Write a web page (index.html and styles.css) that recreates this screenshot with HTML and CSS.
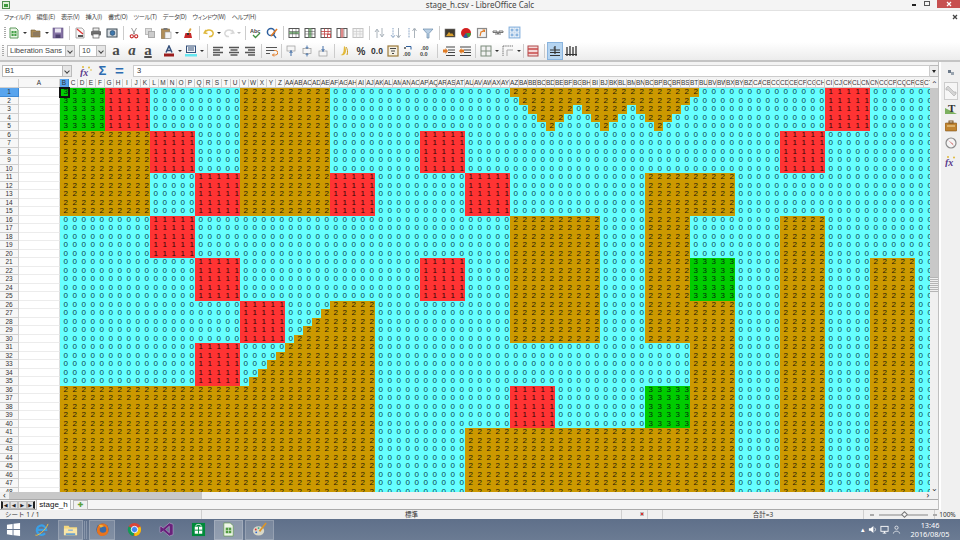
FILE: index.html
```html
<!DOCTYPE html>
<html lang="ja">
<head>
<meta charset="UTF-8">
<title>stage_h.csv - LibreOffice Calc</title>
<link rel="stylesheet" href="styles.css">
</head>
<body>
<div class="window">

  <div class="titlebar">
    <svg class="app-icon" viewBox="0 0 8 8"><rect x="0.5" y="0.5" width="7" height="7" fill="#dff0d8" stroke="#4f8f4f"/><rect x="2" y="3" width="4" height="3" fill="#3d9a3d"/></svg>
    <span class="title">stage_h.csv - LibreOffice Calc</span>
    <div class="win-buttons">
      <span class="win-min"></span>
      <span class="win-max"></span>
      <span class="win-close"><svg viewBox="0 0 6 6"><path d="M1 1l4 4M5 1L1 5" stroke="#fff" stroke-width="1.2"/></svg></span>
    </div>
  </div>

  <div class="menubar">
    <span>ファイル(F)</span><span>編集(E)</span><span>表示(V)</span><span>挿入(I)</span><span>書式(O)</span><span>ツール(T)</span><span>データ(D)</span><span>ウィンドウ(W)</span><span>ヘルプ(H)</span>
    <svg class="menu-close" viewBox="0 0 6 6"><path d="M1 1l4 4M5 1L1 5" stroke="#444" stroke-width="1.3"/></svg>
  </div>

  <div class="toolbar">
    <i class="grip"></i>
    <b class="btn"><svg viewBox="0 0 12 12"><path d="M2 1h6l2 2v8H2z" fill="#eaf5e6" stroke="#5f9a5f"/><rect x="3.5" y="4" width="5" height="5" fill="#43a047"/><path d="M3.5 6.5h5M6 4v5" stroke="#dff0d8" stroke-width=".7"/></svg></b><b class="dd"></b>
    <b class="btn"><svg viewBox="0 0 12 12"><path d="M1 3h4l1 1h4v6H1z" fill="#a98a56" stroke="#6f5a38" stroke-width=".6"/><rect x="3" y="5" width="7" height="4" fill="#8c7a60"/></svg></b><b class="dd"></b>
    <b class="btn"><svg viewBox="0 0 12 12"><rect x="1" y="1" width="10" height="10" fill="#8674a6" stroke="#5f5080" stroke-width=".6"/><rect x="3" y="1.5" width="6" height="4" fill="#e8e4f0"/><rect x="3.5" y="7.5" width="5" height="3.5" fill="#4e4270"/></svg></b>
    <i class="sep"></i>
    <b class="btn"><svg viewBox="0 0 12 12"><path d="M2 1h6l2 2v8H2z" fill="#f6f6f6" stroke="#888" stroke-width=".7"/><path d="M3 2l6 5" stroke="#d33" stroke-width="1.2"/><rect x="4" y="8" width="5" height="2" fill="#555"/></svg></b>
    <b class="btn"><svg viewBox="0 0 12 12"><rect x="3" y="1" width="6" height="3" fill="#eee" stroke="#555" stroke-width=".7"/><rect x="1" y="4" width="10" height="4.5" rx="1" fill="#6f6f6f"/><rect x="3" y="7" width="6" height="4" fill="#fafafa" stroke="#555" stroke-width=".7"/></svg></b>
    <b class="btn"><svg viewBox="0 0 12 12"><rect x="1" y="2" width="10" height="8" fill="#d5dbe0" stroke="#3c4a55"/><circle cx="6.5" cy="6" r="2.4" fill="#3f78ad" stroke="#1f3f60" stroke-width=".6"/></svg></b>
    <i class="sep"></i>
    <b class="btn"><svg viewBox="0 0 12 12"><path d="M3.5 1L7 7.5M8.5 1L5 7.5" stroke="#9a9a9a" stroke-width="1"/><circle cx="3.8" cy="9.3" r="1.6" fill="none" stroke="#c62828" stroke-width="1.1"/><circle cx="8.2" cy="9.3" r="1.6" fill="none" stroke="#c62828" stroke-width="1.1"/></svg></b>
    <b class="btn"><svg viewBox="0 0 12 12"><rect x="1.5" y="1.5" width="6" height="6" fill="#ddd" stroke="#bbb"/><rect x="4.5" y="4.5" width="6" height="6" fill="#ccc" stroke="#aaa"/></svg></b>
    <b class="btn"><svg viewBox="0 0 12 12"><rect x="1.5" y="2" width="8" height="9.5" fill="#b08d57" stroke="#7e6238" stroke-width=".6"/><rect x="3.5" y="1" width="4" height="2" fill="#777"/><rect x="5" y="5" width="6" height="6.5" fill="#f3f3f3" stroke="#999" stroke-width=".6"/></svg></b><b class="dd"></b>
    <b class="btn"><svg viewBox="0 0 12 12"><path d="M8 1l1.5 1L7.5 6 6 5z" fill="#d9a441"/><path d="M3.5 6h5.5l1 5H2z" fill="#c62828"/><path d="M5 6h2v2H5z" fill="#333"/></svg></b>
    <i class="sep"></i>
    <b class="btn btn-s"><svg viewBox="0 0 12 12"><path d="M3 3L1.2 6 4.5 6.5M1.5 5.8C3 2.5 8.5 2 10 5.5 10.8 8 8.5 10 6 9.5" fill="none" stroke="#dfb93f" stroke-width="1.5"/></svg></b><b class="dd"></b>
    <b class="btn btn-s"><svg viewBox="0 0 12 12"><path d="M9 3l1.8 3-3.3.5M10.5 5.8C9 2.5 3.5 2 2 5.5 1.2 8 3.5 10 6 9.5" fill="none" stroke="#d8d8d8" stroke-width="1.5"/></svg></b><b class="dd dd-off"></b>
    <i class="sep"></i>
    <b class="btn"><svg viewBox="0 0 12 12"><text x="0" y="5.5" class="ic-text">Abc</text><path d="M3 8l2.5 2.5L10 6" fill="none" stroke="#3f8f3f" stroke-width="1.3"/></svg></b>
    <b class="btn"><svg viewBox="0 0 12 12"><circle cx="5" cy="5" r="3.6" fill="none" stroke="#2d5f9e" stroke-width="1.5"/><path d="M7 7l3 4" stroke="#2d5f9e" stroke-width="1.3"/><path d="M11 2L5 9" stroke="#e07b24" stroke-width="1.6"/></svg></b>
    <i class="sep"></i>
    <b class="btn"><svg viewBox="0 0 12 12"><rect x="1" y="1.5" width="10" height="9" fill="#fff" stroke="#555"/><rect x="1" y="4.5" width="10" height="2.5" fill="#7fb27f"/><path d="M1 4.5h10M1 7h10M4.5 1.5v9M8 1.5v9" stroke="#555" stroke-width=".5"/></svg></b>
    <b class="btn"><svg viewBox="0 0 12 12"><rect x="1" y="1.5" width="10" height="9" fill="#fff" stroke="#555"/><rect x="4.5" y="1.5" width="3" height="9" fill="#7fb27f"/><path d="M1 4.5h10M1 7h10M4.5 1.5v9M8 1.5v9" stroke="#555" stroke-width=".5"/></svg></b>
    <b class="btn"><svg viewBox="0 0 12 12"><rect x="1" y="1.5" width="10" height="9" fill="#fff" stroke="#555"/><path d="M1 4.5h10M1 7h10M4.5 1.5v9M8 1.5v9" stroke="#c04040" stroke-width=".8"/><rect x="7.5" y="7.5" width="3" height="3" fill="#fff" stroke="#c04040" stroke-width=".8"/></svg></b>
    <b class="btn"><svg viewBox="0 0 12 12"><rect x="1" y="1.5" width="10" height="9" fill="#fff" stroke="#555"/><rect x="4.5" y="1.5" width="3" height="9" fill="#e08a8a"/><path d="M4.5 1.5v9M8 1.5v9" stroke="#555" stroke-width=".5"/></svg></b>
    <b class="btn"><svg viewBox="0 0 12 12"><rect x="1" y="1.5" width="10" height="9" fill="#f4f4f4" stroke="#c4c4c4"/><path d="M1 4.5h10M1 7h10M4.5 1.5v9M8 1.5v9" stroke="#cfcfcf" stroke-width=".7"/></svg></b>
    <i class="sep"></i>
    <b class="btn"><svg viewBox="0 0 12 12"><path d="M3 11V3M1 5l2-3 2 3M8 1v8M6 7l2 3 2-3" fill="none" stroke="#aab3bb" stroke-width="1"/></svg></b>
    <b class="btn"><svg viewBox="0 0 12 12"><path d="M3 1v9M1 8l2 3 2-3" fill="none" stroke="#7e9cc0" stroke-width="1" stroke-dasharray="1 .6"/><path d="M8.5 1v9M6.5 8l2 3 2-3" fill="none" stroke="#aab3bb" stroke-width="1"/></svg></b>
    <b class="btn"><svg viewBox="0 0 12 12"><path d="M3 1v10" stroke="#7e9cc0" stroke-width="1" stroke-dasharray="1 .6"/><path d="M8.5 11V2M6.5 4l2-3 2 3" fill="none" stroke="#aab3bb" stroke-width="1"/></svg></b>
    <b class="btn"><svg viewBox="0 0 12 12"><path d="M1 2h10L7 6.5V11H5V6.5z" fill="#b9cfe4" stroke="#6a8bab" stroke-width=".7"/></svg></b>
    <i class="sep"></i>
    <b class="btn"><svg viewBox="0 0 12 12"><rect x="1" y="2" width="10" height="8" fill="#3f3a30" stroke="#777" stroke-width=".6"/><path d="M2 9l3-4 2 2 1-1 2 3z" fill="#d9a02f"/></svg></b>
    <b class="btn"><svg viewBox="0 0 12 12"><circle cx="6" cy="6" r="5" fill="#d32020"/><path d="M6 6h5a5 5 0 0 1-3 4.6z" fill="#3d9a3d"/><path d="M6 6l2 4.6A5 5 0 0 1 3 10z" fill="#2d5f9e"/></svg></b>
    <b class="btn"><svg viewBox="0 0 12 12"><rect x="1.5" y="1.5" width="9" height="9" fill="#f2f2f2" stroke="#8a8a8a" stroke-width="1.2"/><path d="M4 9l1-4 3-1M6.5 3H8.5V5" fill="none" stroke="#e07b24" stroke-width="1.1"/></svg></b>
    <b class="btn"><svg viewBox="0 0 12 12"><path d="M1 4h4v1.5H1zM7 4h4v1.5H7zM3 7h6" fill="none" stroke="#666" stroke-width=".9"/><path d="M5 5l2 2M7 5L5 7" stroke="#666" stroke-width=".8"/></svg></b>
    <b class="btn btn-on"><svg viewBox="0 0 12 12"><rect x=".5" y=".5" width="11" height="11" fill="#8ab4de"/><rect x="2" y="2" width="3.5" height="3.5" fill="none" stroke="#fff" stroke-width=".8"/><rect x="6.5" y="2" width="3.5" height="3.5" fill="none" stroke="#fff" stroke-width=".8"/><rect x="2" y="6.5" width="3.5" height="3.5" fill="none" stroke="#fff" stroke-width=".8"/><rect x="6.5" y="6.5" width="3.5" height="3.5" fill="none" stroke="#fff" stroke-width=".8"/></svg></b>
  </div>

  <div class="toolbar toolbar-format">
    <i class="grip"></i>
    <div class="combo combo-font"><span>Liberation Sans</span><u></u></div>
    <div class="combo combo-size"><span>10</span><u></u></div>
    <b class="btn letter">a</b>
    <b class="btn letter letter-i">a</b>
    <b class="btn letter letter-u">a</b>
    <b class="gap"></b>
    <b class="btn"><svg viewBox="0 0 12 12"><path d="M3 7.5L6 1l3 6.5M4 5.5h4" fill="none" stroke="#35507a" stroke-width="1.5"/><rect x="1" y="8.5" width="10" height="3" fill="#9a1c1c"/></svg></b><b class="dd"></b>
    <b class="btn"><svg viewBox="0 0 12 12"><rect x="1.5" y="1" width="9" height="6.5" fill="#f2f4f6" stroke="#35507a"/><path d="M3 3h6M3 5h6" stroke="#35507a"/><rect x="0" y="9" width="12" height="2.5" fill="#66e6f0"/></svg></b><b class="dd"></b>
    <i class="sep sep-5"></i>
    <b class="btn"><svg viewBox="0 0 12 12"><path d="M1 2.5h10M1 5h7M1 7.5h10M1 10h7" stroke="#555" stroke-width="1.3"/></svg></b>
    <b class="btn"><svg viewBox="0 0 12 12"><path d="M1 2.5h10M2.5 5h7M1 7.5h10M2.5 10h7" stroke="#555" stroke-width="1.3"/></svg></b>
    <b class="btn"><svg viewBox="0 0 12 12"><path d="M1 2.5h10M4 5h7M1 7.5h10M4 10h7" stroke="#555" stroke-width="1.3"/></svg></b>
    <i class="sep"></i>
    <b class="btn"><svg viewBox="0 0 12 12"><path d="M0 2.5h11M0 5.5h8.5M0 8.5h4" stroke="#555" stroke-width="1.2"/><path d="M8 5.5h1.5a2 2 0 0 1 0 4.5H6.5M8 8.5l-1.5 1.5 1.500 1.5" fill="none" stroke="#e07b24" stroke-width="1"/></svg></b>
    <i class="sep sep-3"></i>
    <b class="btn"><svg viewBox="0 0 12 12"><rect x="2" y="1" width="8" height="5" fill="#f5f5f5" stroke="#999" stroke-width=".7"/><path d="M6 5v6M4.5 8L6 6.5 7.5 8" fill="none" stroke="#2d5f9e" stroke-width=".9"/></svg></b>
    <b class="btn"><svg viewBox="0 0 12 12"><rect x="2" y="3.5" width="8" height="5" fill="#f5f5f5" stroke="#999" stroke-width=".7"/><path d="M6 .5v3M4.7 2L6 3.5 7.3 2M6 11.5v-3M4.7 10L6 8.5 7.3 10" fill="none" stroke="#2d5f9e" stroke-width=".8"/></svg></b>
    <b class="btn"><svg viewBox="0 0 12 12"><rect x="2" y="6" width="8" height="5" fill="#f5f5f5" stroke="#999" stroke-width=".7"/><path d="M6 1v6M4.5 4L6 5.5 7.5 4" fill="none" stroke="#2d5f9e" stroke-width=".9"/></svg></b>
    <i class="sep"></i>
    <b class="btn"><svg viewBox="0 0 12 12"><path d="M5 1c2 1 2.5 5 1.5 7C5.5 10.5 3 10.5 1.5 10 3.5 9.5 4 8 4.5 6.5z" fill="#e2b93a"/><path d="M7 2c1.5 2 2 5 1 8" fill="none" stroke="#c99a1f"/></svg></b>
    <b class="btn num">%</b>
    <b class="btn num num-s">0.0</b>
    <b class="btn"><svg viewBox="0 0 12 12"><rect x="1" y="1" width="10" height="10" fill="#f4efe2" stroke="#9c7a3a" stroke-width="1.2"/><path d="M3 3.5h6M4 6h4M5 8.5h2" stroke="#444"/></svg></b>
    <b class="btn"><svg viewBox="0 0 12 12"><path d="M3 1.5h5v3" fill="none" stroke="#2d5f9e"/><text x="0" y="11" class="ic-text">.00</text><rect x="1" y="2" width="2" height="2" fill="#777"/></svg></b>
    <b class="btn"><svg viewBox="0 0 12 12"><text x="2" y="5" class="ic-text">.00</text><text x="1" y="11" class="ic-text">0.0</text></svg></b>
    <i class="sep sep-8"></i>
    <b class="btn"><svg viewBox="0 0 12 12"><path d="M3 2h9M5 5h7M5 7.5h7M3 10.5h9" stroke="#444" stroke-width="1.1"/><path d="M0 4.5h2.5V3L5 6 2.5 9V7.5H0z" fill="#e07b24"/></svg></b>
    <b class="btn"><svg viewBox="0 0 12 12"><path d="M1 2h11M5 5h7M5 7.5h7M1 10.5h11" stroke="#444" stroke-width="1.1"/><path d="M5 4.5H2.5V3L0 6l2.5 3V7.5H5z" fill="#e07b24"/></svg></b>
    <i class="sep sep-5"></i>
    <b class="btn"><svg viewBox="0 0 12 12"><rect x="1" y="1" width="10" height="10" fill="#f2f2f2" stroke="#7d8c7d"/><path d="M6 1v10M1 6h10" stroke="#7d8c7d"/></svg></b><b class="dd"></b>
    <b class="btn"><svg viewBox="0 0 12 12"><path d="M1 1h10M1 1v10" stroke="#777" stroke-width="1" stroke-dasharray="1.5 .7"/><path d="M5 5h6M5 5v6" stroke="#aaa" stroke-width="1"/></svg></b><b class="dd"></b>
    <i class="sep sep-3"></i>
    <b class="btn"><svg viewBox="0 0 12 12"><rect x="1" y="1" width="10" height="10" fill="#f4d8d8" stroke="#b04848"/><path d="M1 4h10M1 8h10" stroke="#c84a4a" stroke-width="1.3"/></svg></b>
    <i class="sep"></i>
    <b class="btn btn-active"><svg viewBox="0 0 12 12"><path d="M6 1v8M4.5 3h1.5M1 5h10M1 7.5h10M1 10.5h10" stroke="#333" stroke-width="1.2"/></svg></b>
    <b class="btn"><svg viewBox="0 0 12 12"><path d="M2 2v9M5 1v10M8 2v9M11 1v10" stroke="#333" stroke-width="1.3"/><path d="M0 9.5h12" stroke="#333"/></svg></b>
  </div>

  <div class="workspace">
    <div class="sheet-pane">

      <div class="formula-bar">
        <div class="combo combo-name"><span>B1</span><u></u></div>
        <span class="fx-btn"><svg viewBox="0 0 12 12"><text x="0" y="10.5" class="fx-text">fx</text><circle cx="3" cy="2" r="1" fill="#e0b93a"/><circle cx="9" cy="2.5" r="1" fill="#e0b93a"/><circle cx="11" cy="5" r=".8" fill="#e0b93a"/></svg></span>
        <span class="fx-btn fx-sum">Σ</span>
        <span class="fx-btn fx-eq">=</span>
        <div class="formula-input">3</div>
        <u class="formula-drop"></u>
      </div>

      <div class="sheet-wrap">
        <div class="sheet" id="sheet"></div>
        <div class="vscroll">
          <span class="arrow">⌃</span>
          <div class="vthumb"><i></i></div>
          <div class="vtrack"></div>
          <span class="arrow">⌄</span>
        </div>
      </div>

      <div class="hscroll">
        <span class="arrow arrow-left">‹</span>
        <div class="hthumb"></div>
        <div class="htrack"></div>
        <span class="arrow arrow-right">›</span>
      </div>

      <div class="tabs">
        <span class="tab-nav tab-first">◀</span><span class="tab-nav">◀</span><span class="tab-nav">▶</span><span class="tab-nav tab-last">▶</span>
        <span class="tab">stage_h</span>
        <span class="tab-add">✚</span>
      </div>
    </div>

    <div class="sidebar">
      <span class="side-top"><svg viewBox="0 0 8 8"><rect x="1" y="2" width="3" height="3" fill="#6d7a8a"/><rect x="4" y="4" width="3" height="3" fill="#9aa5b0"/></svg></span>
      <span class="side-item side-on"><svg viewBox="0 0 12 12"><path d="M1 3l2-2 2 2 4 4 2 0v2l-2 2-2-2-4-4-2 0z" fill="#d4d4d4" stroke="#aaa" stroke-width=".6"/></svg></span>
      <span class="side-item"><svg viewBox="0 0 12 12"><path d="M0 12V6l12 6z" fill="#7cb060"/><text x="3" y="9.5" class="side-t">T</text></svg></span>
      <span class="side-item"><svg viewBox="0 0 12 12"><rect x="0" y="3" width="12" height="8" rx="1" fill="#c08430" stroke="#7e5420" stroke-width=".6"/><rect x="4" y="1" width="4" height="2" fill="none" stroke="#7e5420"/><path d="M2 6h8" stroke="#f0d090" stroke-width="1.2"/></svg></span>
      <span class="side-item"><svg viewBox="0 0 12 12"><circle cx="6" cy="6" r="5" fill="#f4f4f4" stroke="#8b8b8b" stroke-width="1.2"/><path d="M3 3l4.5 3.5L9 9z" fill="#c64848"/></svg></span>
      <span class="side-item"><svg viewBox="0 0 12 12"><text x="0" y="10.5" class="fx-text">fx</text><circle cx="3" cy="2" r="1" fill="#e0b93a"/><circle cx="9" cy="2.5" r="1" fill="#e0b93a"/></svg></span>
    </div>
  </div>

  <div class="statusbar">
    <span class="st st-sheet">シート 1 / 1</span>
    <span class="st st-style">標準</span>
    <span class="st st-icon"><i></i></span>
    <span class="st st-blank"></span>
    <span class="st st-sum">合計=3</span>
    <span class="st st-zoom"><i class="minus"></i><i class="slider"><em></em></i><i class="plus"></i></span>
    <span class="st st-pct">100%</span>
  </div>

  <div class="taskbar">
    <span class="task task-start"><svg viewBox="0 0 16 16"><path d="M1 3l6-1v5.5H1zM8 1.8L15 1v6.5H8zM1 8.5h6V14l-6-1zM8 8.5h7V15l-7-1z" fill="#fff"/></svg></span>
    <span class="task task-ie"><svg viewBox="0 0 16 16"><path d="M3.5 8.5h9.5A5 5 0 1 0 11.8 12" fill="none" stroke="#3aa0e8" stroke-width="2.4"/><path d="M1.500 14c2 1.500 11-5 13.500-12" fill="none" stroke="#f0c040" stroke-width="1"/></svg></span>
    <span class="task task-open task-files"><svg viewBox="0 0 16 16"><path d="M1 4h5l1 1.5h8V14H1z" fill="#f4d77e"/><rect x="1" y="7" width="14" height="7" fill="#f9e6a8"/><rect x="5.5" y="8" width="5" height="1.5" fill="#8fb6d6"/><rect x="3" y="12" width="10" height="2" fill="#6aa0cc"/></svg></span>
    <i class="task-grip"></i>
    <span class="task task-open"><svg viewBox="0 0 16 16"><circle cx="8" cy="8" r="6.5" fill="#2d5a96"/><path d="M2 9c0-5 3-7.5 6-7.5 3 0 6 2 6.3 5.5C15 12 12 15 8 15c-3.5 0-6-3-6-6z" fill="#e8741e"/><circle cx="8.5" cy="8" r="3.5" fill="#3b6ba8"/><path d="M4 3c2-.5 5 .5 5.5 1.5L6 6z" fill="#f2b43a"/></svg></span>
    <span class="task"><svg viewBox="0 0 16 16"><circle cx="8" cy="8" r="7" fill="#db4437"/><path d="M8 8l6.2-3.2A7 7 0 0 1 8 15z" fill="#f4c20d"/><path d="M8 8l-1 7A7 7 0 0 1 1.8 4.5z" fill="#0f9d58"/><circle cx="8" cy="8" r="3.4" fill="#4285f4" stroke="#fff" stroke-width="1"/></svg></span>
    <span class="task"><svg viewBox="0 0 16 16"><path d="M11 1l4 1.5v11L11 15 4.5 9.5 2 11.5 1 11V5l1-.5L4.5 6.5zM11 4.5L7 8l4 3.5z" fill="#68217a" stroke="#d0c0e0" stroke-width=".5"/></svg></span>
    <span class="task"><svg viewBox="0 0 16 16"><rect x="1" y="1" width="14" height="14" fill="#008a3a"/><path d="M5 4.5C5 2 11 2 11 4.5" fill="none" stroke="#fff"/><rect x="4" y="5" width="8" height="7.5" fill="#fff"/><path d="M8 5v7.5M4 8.7h8" stroke="#008a3a"/></svg></span>
    <span class="task task-open task-calc"><svg viewBox="0 0 16 16"><path d="M3 1h7l3 3v11H3z" fill="#eef6e8" stroke="#6a9a5a" stroke-width=".8"/><rect x="5" y="6" width="6" height="6" fill="#4f9a3d"/><path d="M8 6v6M5 9h6" stroke="#eef6e8" stroke-width=".6"/></svg></span>
    <span class="task task-open task-paint"><svg viewBox="0 0 16 16"><ellipse cx="7" cy="9.5" rx="6" ry="5" fill="#d8d8c8"/><circle cx="4" cy="8" r="1" fill="#d33"/><circle cx="7" cy="6.5" r="1" fill="#3a8"/><circle cx="4.5" cy="11" r="1" fill="#36c"/><path d="M15 1L8 10" stroke="#d9942a" stroke-width="1.8"/></svg></span>
    <div class="tray">
      <span class="tray-up">▴</span>
      <svg class="tray-icon" viewBox="0 0 10 10"><path d="M1 3.5h2L6 1v8L3 6.5H1z" fill="#fff"/><path d="M7.5 3a3 3 0 0 1 0 4" fill="none" stroke="#fff" stroke-width=".8"/></svg>
      <svg class="tray-icon" viewBox="0 0 10 10"><rect x="1" y="1.5" width="8" height="5.5" fill="none" stroke="#fff"/><path d="M3 9h4M5 7v2" stroke="#fff"/></svg>
      <svg class="tray-icon" viewBox="0 0 10 10"><circle cx="5" cy="3" r="1.8" fill="none" stroke="#fff" stroke-width=".8"/><path d="M1.5 9.5C2 6 8 6 8.5 9.5" fill="none" stroke="#fff" stroke-width=".8"/></svg>
      <div class="clock"><span>13:46</span><span>2016/08/05</span></div>
    </div>
  </div>

</div>
<script src="script.js"></script>
</body>
</html>
```

FILE: styles.css
```css
* {
  box-sizing: border-box;
}

body {
  margin: 0;
  width: 960px;
  height: 540px;
  overflow: hidden;
  font-family: "Noto Sans", "Noto Sans CJK JP", sans-serif;
  color: #333;
  background: #f0f0f0;
}

.window {
  display: flex;
  flex-direction: column;
  height: 540px;
}

/* title + menu */
.titlebar {
  height: 11px;
  flex: none;
  display: flex;
  align-items: center;
  justify-content: center;
  position: relative;
  background: #f4f4f4;
  border-bottom: 1px solid #e2e2e2;
}

.app-icon {
  position: absolute;
  left: 2px;
  top: 1px;
  width: 8px;
  height: 8px;
}

.title {
  font-size: 8px;
  line-height: 10px;
  color: #444;
}

.win-buttons {
  position: absolute;
  right: 0;
  top: 0;
  display: flex;
  align-items: flex-start;
}

.win-min {
  width: 4px;
  height: 2px;
  margin: 4px 8px 0 0;
  background: #222;
}

.win-max {
  width: 6px;
  height: 5px;
  margin: 1px 7px 0 0;
  border: 1px solid #555;
}

.win-close {
  width: 23px;
  height: 8px;
  display: flex;
  align-items: center;
  justify-content: center;
  background: #c75050;
}

.win-close svg {
  width: 6px;
  height: 6px;
}

.menubar {
  height: 12px;
  flex: none;
  display: flex;
  align-items: center;
  gap: 6px;
  padding-left: 4px;
  font-family: "Noto Sans CJK JP", sans-serif;
  font-feature-settings: "palt";
  font-size: 6.2px;
  letter-spacing: -.35px;
  line-height: 12px;
  color: #444;
  background: #fff;
}

.menu-close {
  width: 6px;
  height: 6px;
  margin-left: auto;
  margin-right: 2px;
}

/* toolbars */
.toolbar {
  height: 19px;
  flex: none;
  display: flex;
  align-items: center;
  padding-left: 4px;
  background: #fff;
}

.toolbar-format {
  padding-left: 2px;
  height: 20px;
  background: linear-gradient(#fff, #ececec);
  border-bottom: 2px solid #c4c4c4;
}

.grip {
  width: 2px;
  height: 12px;
  background: repeating-linear-gradient(#aaa 0 1px, transparent 1px 2px);
}

.btn {
  width: 16px;
  height: 16px;
  flex: none;
  display: flex;
  align-items: center;
  justify-content: center;
  font-weight: 400;
}

.btn svg {
  width: 12px;
  height: 12px;
}

.btn-s {
  width: 14px;
}

.btn-on svg {
  width: 13px;
  height: 13px;
}

.btn-active {
  height: 18px;
  background: #b5d4f0;
  border: 1px solid #8ab4de;
}

.dd {
  width: 6px;
  height: 16px;
  flex: none;
  position: relative;
}

.dd::after {
  content: "";
  position: absolute;
  left: 1px;
  top: 7px;
  border: 2px solid transparent;
  border-top: 2.5px solid #333;
  border-bottom: 0;
}

.dd-off::after {
  border-top-color: #bbb;
}

.sep {
  width: 6px;
  height: 14px;
  flex: none;
  background: linear-gradient(#ccc, #ccc) center / 1px 100% no-repeat;
}

.sep-3 {
  width: 3px;
}

.sep-5 {
  width: 5px;
}

.sep-8 {
  width: 8px;
}

.gap {
  width: 5px;
  flex: none;
}

.combo {
  height: 12px;
  flex: none;
  display: flex;
  justify-content: space-between;
  background: #fff;
  border: 1px solid #bbb;
  font-family: "Liberation Sans", sans-serif;
  font-size: 7.5px;
  line-height: 10px;
  color: #444;
  padding-left: 2px;
}

.combo u {
  width: 9px;
  flex: none;
  position: relative;
  background: #e6e6e6;
  border-left: 1px solid #bbb;
}

.combo u::after {
  content: "";
  position: absolute;
  left: 2px;
  top: 3px;
  width: 3px;
  height: 3px;
  border-right: 1px solid #444;
  border-bottom: 1px solid #444;
  transform: rotate(45deg);
}

.combo-font {
  width: 68px;
  margin-left: 3px;
}

.combo-size {
  width: 27px;
  margin-left: 4px;
  margin-right: 2px;
}

.letter {
  font-family: "Liberation Serif", serif;
  font-size: 15px;
  line-height: 14px;
  font-weight: 700;
  color: #4a4a4a;
  padding-bottom: 3px;
}

.letter-i {
  font-style: italic;
}

.letter-u {
  text-decoration: underline;
  text-decoration-thickness: 1.5px;
}

.num {
  font-family: "Liberation Sans", sans-serif;
  font-size: 10px;
  font-weight: 700;
  color: #333;
}

.num-s {
  font-size: 8.5px;
}

.ic-text {
  font-family: "Liberation Sans", sans-serif;
  font-size: 5.5px;
  font-weight: 700;
  fill: #444;
}

/* formula bar */
.workspace {
  height: 448px;
  flex: none;
  display: flex;
}

.sheet-pane {
  width: 938px;
  display: flex;
  flex-direction: column;
  flex: none;
}

.formula-bar {
  height: 17px;
  flex: none;
  display: flex;
  align-items: center;
  padding-left: 2px;
  background: #f3f3f3;
}

.combo-name {
  width: 70px;
}

.fx-btn {
  width: 17px;
  height: 14px;
  flex: none;
  display: flex;
  align-items: center;
  justify-content: center;
}

.fx-btn:first-of-type {
  margin-left: 5px;
}

.fx-btn svg {
  width: 12px;
  height: 12px;
}

.fx-text {
  font-family: "Liberation Serif", serif;
  font-size: 10px;
  font-style: italic;
  font-weight: 700;
  fill: #5b3c8c;
}

.fx-sum {
  font-family: "Liberation Sans", sans-serif;
  font-size: 13px;
  line-height: 14px;
  font-weight: 700;
  color: #2d6cb0;
}

.fx-eq {
  font-family: "Liberation Sans", sans-serif;
  font-size: 15px;
  line-height: 14px;
  font-weight: 700;
  color: #2d6cb0;
}

.formula-input {
  width: 797px;
  height: 12px;
  margin-left: 5px;
  flex: none;
  padding-left: 3px;
  background: #fff;
  border: 1px solid #ccc;
  font-family: "Liberation Sans", sans-serif;
  font-size: 7.5px;
  line-height: 10px;
}

.formula-drop {
  width: 9px;
  height: 12px;
  flex: none;
  position: relative;
  background: #ececec;
  border: 1px solid #bbb;
  border-left: 0;
}

.formula-drop::after {
  content: "";
  position: absolute;
  left: 2px;
  top: 4px;
  border: 2.5px solid transparent;
  border-top: 3px solid #222;
  border-bottom: 0;
}

/* sheet grid */
.sheet-wrap {
  height: 413px;
  flex: none;
  display: flex;
}

.sheet {
  width: 930px;
  height: 413px;
  flex: none;
  overflow: hidden;
  display: grid;
  grid-template-columns: 19px 41px repeat(97, 9px);
  grid-template-rows: 9px repeat(48, 8.5px);
  background: #fff;
  font-family: "Liberation Sans", sans-serif;
  font-size: 8px;
  line-height: 8.5px;
}

.head {
  overflow: hidden;
  text-align: center;
  white-space: nowrap;
  font-size: 6.5px;
  color: #333;
  background: #f7f7f7;
  border-right: 1px solid #cfcfcf;
  border-bottom: 1px solid #cfcfcf;
}

.head-sel {
  background: #59a5ee;
  border-color: #3f8ad4;
}

.blank {
  background: #fff;
  border-right: 1px solid #ddd;
  border-bottom: 1px solid #ececec;
}

.cell {
  overflow: hidden;
  text-align: right;
  padding-right: 1px;
  white-space: nowrap;
}

.c0 {
  background: #66ffff;
  color: #0c3f4a;
}

.c1 {
  background: #ff3333;
  color: #2e0606;
}

.c2 {
  background: #cc9900;
  color: #1f1808;
}

.c3 {
  background: #00cc00;
  color: #042e0c;
}

.cursor {
  position: relative;
  z-index: 1;
  overflow: visible;
  outline: 2px solid #111;
  outline-offset: -1px;
}

/* scrollbars */
.vscroll {
  width: 8px;
  flex: none;
  display: flex;
  flex-direction: column;
  background: #f0f0f0;
}

.arrow {
  height: 9px;
  flex: none;
  font-size: 8px;
  line-height: 9px;
  text-align: center;
  color: #333;
}

.vthumb {
  height: 194px;
  flex: none;
  position: relative;
  background: #c8c8c8;
}

.vthumb i {
  position: absolute;
  left: 0;
  right: 0;
  bottom: -11px;
  height: 16px;
  background: repeating-linear-gradient(#b5b5b5 0 1px, #efefef 1px 2px);
}

.vtrack {
  flex: 1;
}

.hscroll {
  height: 8px;
  flex: none;
  display: flex;
  align-items: stretch;
  background: #f0f0f0;
  border-bottom: 1px solid #aaa;
}

.arrow-left {
  width: 9px;
}

.arrow-right {
  width: 8px;
  margin-right: 6px;
}

.arrow-left, .arrow-right {
  height: 7px;
  line-height: 6px;
  font-size: 9px;
}

.hthumb {
  width: 193px;
  flex: none;
  background: #c8c8c8;
}

.htrack {
  flex: 1;
}

/* sheet tabs */
.tabs {
  height: 10px;
  flex: none;
  display: flex;
  align-items: center;
  padding-left: 1px;
  background: #f5f5f5;
  border-bottom: 1px solid #aaa;
}

.tab-nav {
  width: 8.5px;
  height: 8px;
  flex: none;
  font-family: "DejaVu Sans", sans-serif;
  font-size: 5px;
  line-height: 6px;
  text-align: center;
  color: #222;
  background: #e2e2e2;
  border: 1px solid #bbb;
}

.tab-first {
  border-left: 2px solid #222;
}

.tab-last {
  border-right: 2px solid #222;
}

.tab {
  width: 35px;
  height: 10px;
  flex: none;
  margin-left: 1px;
  font-family: "Liberation Sans", sans-serif;
  font-size: 8px;
  line-height: 9px;
  text-align: center;
  color: #111;
  background: #fff;
  border-left: 1px solid #bbb;
  border-right: 1px solid #bbb;
}

.tab-add {
  width: 15px;
  height: 10px;
  flex: none;
  margin-left: 2px;
  font-family: "DejaVu Sans", sans-serif;
  font-size: 7px;
  line-height: 8px;
  text-align: center;
  color: #5ba03a;
  background: #f0f0f0;
  border: 1px solid #bbb;
}

/* sidebar */
.sidebar {
  width: 22px;
  flex: none;
  display: flex;
  flex-direction: column;
  align-items: center;
  padding-left: 3px;
  background: #f0f0f0;
  border-left: 1px solid #c0c0c0;
  box-shadow: inset 2px 0 0 #fff;
}

.side-top {
  height: 20px;
  padding-top: 6px;
}

.side-top svg {
  display: block;
  width: 8px;
  height: 8px;
}

.side-item {
  width: 14px;
  height: 17.5px;
  display: flex;
  align-items: center;
  justify-content: center;
}

.side-item svg {
  width: 12px;
  height: 12px;
}

.side-on {
  border: 1px solid #ccc;
  background: #f6f6f6;
}

.side-t {
  font-family: "Liberation Serif", serif;
  font-size: 11px;
  font-weight: 700;
  fill: #333;
}

/* status bar */
.statusbar {
  height: 9px;
  flex: none;
  display: flex;
  font-size: 6.5px;
  line-height: 9px;
  color: #333;
  background: #f0f0f0;
}

.st {
  flex: none;
  height: 9px;
  border-right: 1px solid #cfcfcf;
}

.st-sheet {
  width: 202px;
  padding-left: 5px;
}

.st-style {
  width: 420px;
  text-align: center;
}

.st-icon {
  width: 26px;
  position: relative;
}

.st-icon i {
  position: absolute;
  left: 18px;
  top: 2px;
  width: 4px;
  height: 4px;
  background: #d33;
  border: 1px solid #bbb;
}

.st-blank {
  width: 15px;
}

.st-sum {
  width: 201px;
  text-align: center;
}

.st-zoom {
  width: 71px;
  display: flex;
  align-items: center;
  padding-left: 6px;
}

.st-zoom .minus, .st-zoom .plus {
  width: 4px;
  height: 2px;
  flex: none;
  background: #aaa;
}

.slider {
  width: 49px;
  height: 2px;
  margin: 0 5px;
  flex: none;
  position: relative;
  background: #bbb;
}

.slider em {
  position: absolute;
  left: 23px;
  top: -1.5px;
  width: 5px;
  height: 5px;
  background: #f4f4f4;
  border: 1px solid #777;
  transform: rotate(45deg);
}

.st-pct {
  width: 25px;
  text-align: center;
  border-right: 0;
}

/* taskbar */
.taskbar {
  height: 21px;
  flex: none;
  display: flex;
  align-items: center;
  background: linear-gradient(#5f708a, #6b7b93);
  color: #fff;
}

.task {
  width: 26px;
  height: 20px;
  flex: none;
  margin-right: 6px;
  display: flex;
  align-items: center;
  justify-content: center;
}

.task svg {
  width: 15px;
  height: 15px;
}

.task-start {
  margin-right: 2px;
}

.task-ie {
  margin-right: 4px;
}

.task-open {
  background: rgba(255, 255, 255, .16);
  border: 1px solid rgba(255, 255, 255, .18);
}

.task-files {
  width: 25px;
  margin-right: 1px;
}

.task-grip {
  width: 3px;
  height: 18px;
  flex: none;
  margin-right: 2px;
  border-left: 1px solid #8795aa;
  border-right: 1px solid #8795aa;
}

.task-calc {
  width: 29px;
  margin-left: -3px;
  margin-right: 2px;
  background: rgba(255, 255, 255, .28);
}

.task-paint {
  width: 29px;
}

.tray {
  margin-left: auto;
  display: flex;
  align-items: center;
  gap: 3px;
}

.tray-up {
  font-size: 7px;
}

.tray-icon {
  width: 9px;
  height: 9px;
}

.clock {
  width: 48px;
  margin: 0 6px 0 2px;
  display: flex;
  flex-direction: column;
  align-items: center;
  font-size: 7.3px;
  line-height: 9px;
}
```

FILE: script.js
```js
// stage data, one digit per 5x5 block of cells
const blocks = [
  "31002200000000000100",
  "22102200100000001000",
  "22012210010002200000",
  "00100000002202002000",
  "00010000102202302020",
  "00001000002202202020",
  "00010000000000202020",
  "22222220001003202020",
  "22222220022222202020",
  "22222220022222202020",
];

// slopes drawn on top of the blocks: [row, first col, last col, holes]
const slopes = [
  [0, 50, 70],
  [1, 51, 69],
  [2, 52, 68, [57, 63]],
  [3, 53, 55], [3, 59, 61], [3, 65, 67],
  [4, 54, 54], [4, 60, 60], [4, 66, 66],
];

const sheet = document.getElementById("sheet");
const NB_COLS = 97;
const NB_ROWS = 48;

function colName(i) {
  // i = 0 is column A
  let s = "";
  i++;
  while (i > 0) {
    s = String.fromCharCode(65 + (i - 1) % 26) + s;
    i = Math.floor((i - 1) / 26);
  }
  return s;
}

function valeur(r, c) {
  let v = Number(blocks[Math.floor(r / 5)][Math.floor(c / 5)]);
  for (const s of slopes) {
    if (s[0] === r && c >= s[1] && c <= s[2]) {
      v = s[3] && s[3].includes(c) ? 0 : 2;
    }
  }
  // big staircase, rows 26 to 35
  if (r >= 25 && r <= 34 && c >= 30 - (r - 25) && c < 35) {
    v = 2;
  }
  return v;
}

function ajoute(parent, classe, texte) {
  const div = document.createElement("div");
  div.className = classe;
  div.textContent = texte;
  parent.appendChild(div);
}

const frag = document.createDocumentFragment();

ajoute(frag, "head", "");
ajoute(frag, "head", "A");
for (let c = 0; c < NB_COLS; c++) {
  ajoute(frag, c === 0 ? "head head-sel" : "head", colName(c + 1));
}

for (let r = 0; r < NB_ROWS; r++) {
  ajoute(frag, r === 0 ? "head head-sel" : "head", r + 1);
  ajoute(frag, "blank", "");
  for (let c = 0; c < NB_COLS; c++) {
    const v = valeur(r, c);
    const cursor = r === 0 && c === 0 ? " cursor" : "";
    ajoute(frag, "cell c" + v + cursor, v);
  }
}

sheet.appendChild(frag);
```
